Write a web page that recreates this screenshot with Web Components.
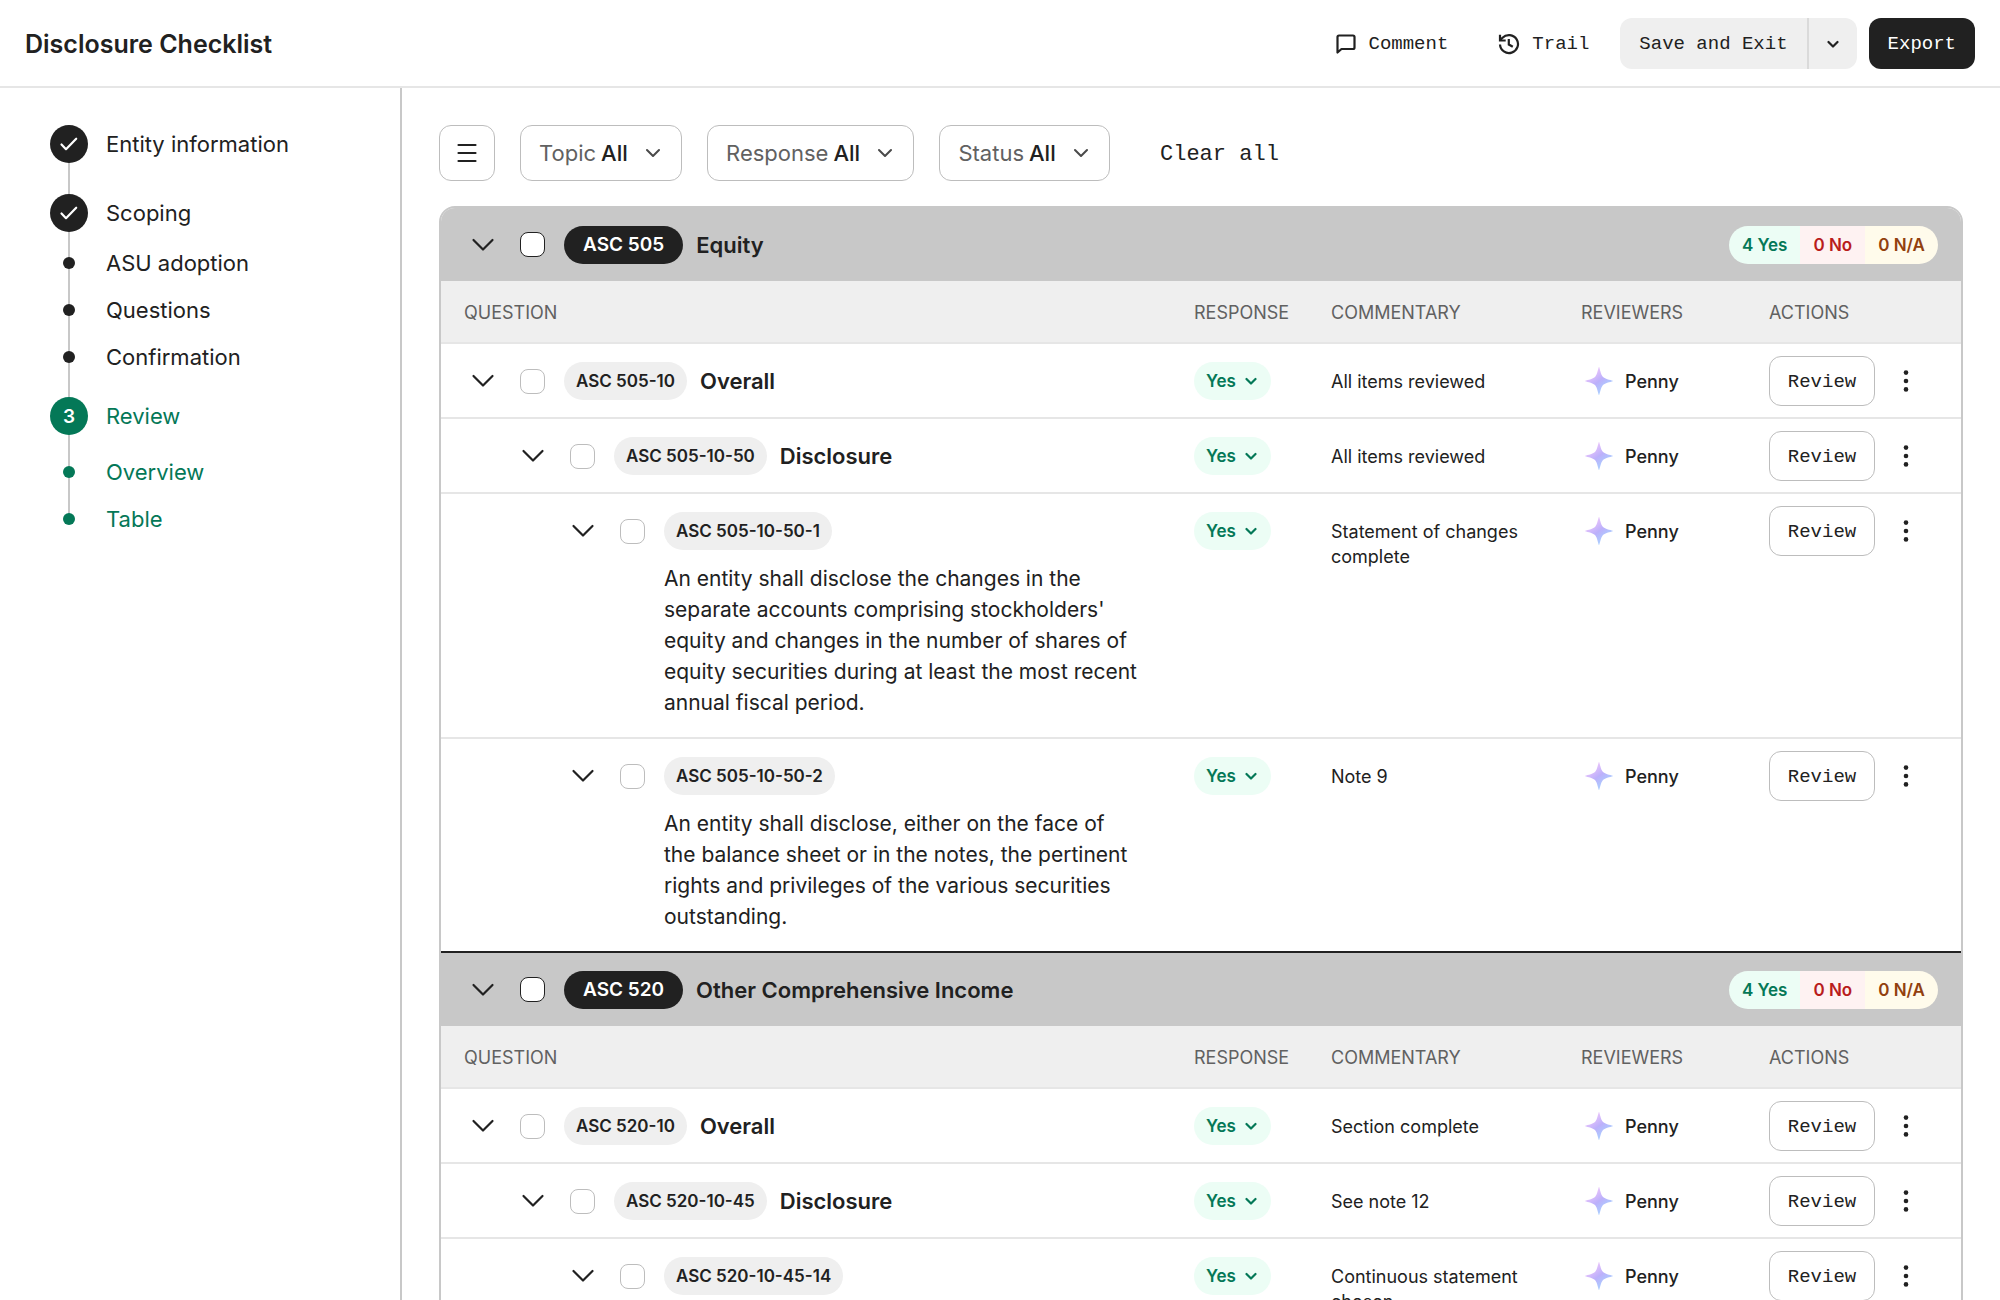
<!DOCTYPE html>
<html lang="en">
<head>
<meta charset="utf-8">
<title>Disclosure Checklist</title>
<style>
    body {
        margin: 0;
        font-family: Inter, "Liberation Sans", sans-serif;
        font-size: 22px;
        color: #212121;
        background: #fff;
        --mono: "Liberation Mono", monospace;
        --ink: #212121;
        --muted: #616161;
        --line: #e6e6e6;
        --edge: #c8c8c8;
        --soft: #efefef;
        --green: #047857;
    }
</style>
</head>
<body>

<checklist-app>
    <app-header slot="header">Disclosure Checklist</app-header>

    <step-list slot="steps">
        <step-item kind="done">Entity information</step-item>
        <step-item kind="done" class="spaced">Scoping</step-item>
        <step-item kind="sub" class="first-sub">ASU adoption</step-item>
        <step-item kind="sub">Questions</step-item>
        <step-item kind="sub">Confirmation</step-item>
        <step-item kind="current" number="3">Review</step-item>
        <step-item kind="sub" active>Overview</step-item>
        <step-item kind="sub" active>Table</step-item>
    </step-list>

    <filter-bar></filter-bar>
    <disclosure-table></disclosure-table>
</checklist-app>

<script>
const icons = {
    chevron: '<svg width="14" height="14" viewBox="0 0 14 14" fill="none" stroke="currentColor" stroke-width="2" stroke-linecap="round" stroke-linejoin="round"><path d="M1 4l6 6 6-6"/></svg>',
    chevronSmall: '<svg width="12" height="12" viewBox="0 0 12 12" fill="none" stroke="currentColor" stroke-width="2.2" stroke-linecap="round" stroke-linejoin="round"><path d="M1.5 4L6 8.5 10.5 4"/></svg>',
    expand: '<svg width="24" height="24" viewBox="0 0 24 24" fill="none" stroke="currentColor" stroke-width="2.2" stroke-linecap="round" stroke-linejoin="round"><path d="M2.5 7L12 16.5 21.5 7"/></svg>',
    check: '<svg width="20" height="20" viewBox="0 0 20 20" fill="none" stroke="currentColor" stroke-width="2.2" stroke-linecap="round" stroke-linejoin="round"><path d="M2.5 10.5L7 15.2 17.2 4.7"/></svg>',
    comment: '<svg width="22" height="22" viewBox="0 0 22 22" fill="none" stroke="currentColor" stroke-width="2.2" stroke-linejoin="round"><path d="M4 2.5h14a1.5 1.5 0 0 1 1.5 1.5v10.5a1.5 1.500 0 0 1-1.5 1.5H6.500L2.5 19.500V4A1.5 1.500 0 0 1 4 2.500z"/></svg>',
    trail: '<svg width="22" height="22" viewBox="0 0 22 22" fill="none" stroke="currentColor" stroke-width="2.2"><path d="M2 11.500a9 9 0 1 0 2.500-6.700L2 7.300"/><path d="M2 1.800v5.700h5.700"/><path d="M10.800 6v5.500l4 2.300"/></svg>',
    menu: '<svg width="20" height="20" viewBox="0 0 20 20" fill="none" stroke="currentColor" stroke-width="2.2" stroke-linecap="round"><path d="M1.500 2h17M1.500 10h17M1.500 18h17"/></svg>',
    dots: '<svg width="6" height="22" viewBox="0 0 6 22" fill="currentColor"><circle cx="3" cy="2.600" r="2.300"/><circle cx="3" cy="11" r="2.300"/><circle cx="3" cy="19.400" r="2.300"/></svg>',
    spark: `<svg width="28" height="28" viewBox="0 0 28 28">
        <defs><linearGradient id="g" x1="0.2" y1="0.1" x2="0.8" y2="0.9">
            <stop offset="0.15" stop-color="#e3c1fb"/><stop offset="0.5" stop-color="#bcb0fb"/><stop offset="0.9" stop-color="#a9d0ff"/>
        </linearGradient></defs>
        <path fill="url(#g)" d="M14 0C14.600 0 15.600 7.500 18 10C20.500 12.400 28 13.400 28 14C28 14.600 20.500 15.600 18 18C15.600 20.500 14.600 28 14 28C13.400 28 12.400 20.500 10 18C7.500 15.600 0 14.600 0 14C0 13.400 7.500 12.400 10 10C12.400 7.500 13.400 0 14 0Z"/></svg>`
};

const topics = [
    {
        code: 'ASC 505', title: 'Equity', counts: ['4 Yes', '0 No', '0 N/A'],
        rows: [
            { level: 0, code: 'ASC 505-10', title: 'Overall', note: 'All items reviewed' },
            { level: 1, code: 'ASC 505-10-50', title: 'Disclosure', note: 'All items reviewed' },
            { level: 2, code: 'ASC 505-10-50-1', note: 'Statement of changes complete',
              text: "An entity shall disclose the changes in the separate accounts comprising stockholders' equity and changes in the number of shares of equity securities during at least the most recent annual fiscal period." },
            { level: 2, code: 'ASC 505-10-50-2', note: 'Note 9',
              text: 'An entity shall disclose, either on the face of the balance sheet or in the notes, the pertinent rights and privileges of the various securities outstanding.' }
        ]
    },
    {
        code: 'ASC 520', title: 'Other Comprehensive Income', counts: ['4 Yes', '0 No', '0 N/A'],
        rows: [
            { level: 0, code: 'ASC 520-10', title: 'Overall', note: 'Section complete' },
            { level: 1, code: 'ASC 520-10-45', title: 'Disclosure', note: 'See note 12' },
            { level: 2, code: 'ASC 520-10-45-14', note: 'Continuous statement chosen' }
        ]
    }
];

class BaseElement extends HTMLElement {
    constructor() {
        super();
        this.attachShadow({ mode: 'open' });
    }

    connectedCallback() {
        const template = document.createElement('template');
        template.innerHTML = `
        <style>
            *{ box-sizing: border-box; }
            svg{ display: block; flex: none; }
            button, select{ margin: 0; font: inherit; color: inherit; background: none; border: 0; padding: 0; cursor: pointer; }
        </style>` + this.render();
        this.shadowRoot.replaceChildren(template.content.cloneNode(true));
    }
}

class ChecklistApp extends BaseElement {
    render() {
        return `
        <style>
            :host{
                display: flex;
                flex-direction: column;
                height: 100vh;
            }
            .body{
                flex: 1;
                min-height: 0;
                display: flex;
            }
            aside{
                flex: 0 0 20%;
                min-width: 320px;
                box-sizing: content-box;
                border-right: 2px solid var(--edge);
            }
            main{
                flex: 1;
                min-width: 0;
                padding: 37px 37px 0;
                overflow-y: auto;
                scrollbar-width: none;
            }
        </style>
        <slot name="header"></slot>
        <div class="body">
            <aside><slot name="steps"></slot></aside>
            <main><slot></slot></main>
        </div>`;
    }
}
customElements.define('checklist-app', ChecklistApp);

class AppHeader extends BaseElement {
    render() {
        return `
        <style>
            :host{ display: block; }
            header{
                display: flex;
                align-items: center;
                justify-content: space-between;
                padding: 18px 25px 17px;
                border-bottom: 2px solid var(--line);
            }
            h1{
                margin: 0;
                font-size: 25px;
                font-weight: 600;
            }
            .tools{
                display: flex;
                gap: 12px;
                font-family: var(--mono);
                font-size: 19px;
            }
            .tools button{
                display: flex;
                align-items: center;
                gap: 12px;
                height: 51px;
                padding: 0 19px;
            }
            .split{
                display: flex;
                background: var(--soft);
                border-radius: 12px;
            }
            .split button + button{ border-left: 2px solid #dadada; padding: 0 18px; }
            .tools .primary{
                background: var(--ink);
                color: #fff;
                border-radius: 12px;
            }
        </style>
        <header>
            <h1><slot></slot></h1>
            <div class="tools">
                <button>${icons.comment}Comment</button>
                <button>${icons.trail}Trail</button>
                <div class="split">
                    <button>Save and Exit</button>
                    <button aria-label="More">${icons.chevronSmall}</button>
                </div>
                <button class="primary">Export</button>
            </div>
        </header>`;
    }
}
customElements.define('app-header', AppHeader);

class StepList extends BaseElement {
    render() {
        return `
        <style>
            :host{ display: block; padding: 37px 25px 0 50px; }
            /* the rail runs from the first marker's middle to the last one's */
            nav{
                display: flex;
                flex-direction: column;
                background: linear-gradient(var(--edge), var(--edge)) 18px 19px / 2px calc(100% - 42px) no-repeat;
            }
        </style>
        <nav><slot></slot></nav>`;
    }
}
customElements.define('step-list', StepList);

class StepItem extends BaseElement {
    render() {
        const kind = this.getAttribute('kind');
        const inner = kind === 'done' ? icons.check : (this.getAttribute('number') || '');
        return `
        <style>
            :host{ display: block; }
            :host(.spaced){ margin-top: 31px; }
            :host(.first-sub){ margin-top: 7px; }
            :host([kind="current"]){ margin: 17px 0 13px; }
            :host([kind="current"]), :host([active]){ color: var(--green); }
            a{
                display: flex;
                align-items: center;
                gap: 18px;
                height: 38px;
                color: inherit;
                text-decoration: none;
            }
            :host([kind="sub"]) a{ height: 47px; }
            .slot{ width: 38px; display: flex; justify-content: center; }
            .marker{
                width: 38px;
                height: 38px;
                border-radius: 50%;
                display: flex;
                align-items: center;
                justify-content: center;
                background: var(--ink);
                color: #fff;
                font-size: 19px;
                font-weight: 600;
            }
            :host([kind="current"]) .marker, :host([active]) .marker{ background: var(--green); }
            :host([kind="sub"]) .marker{ width: 12px; height: 12px; }
        </style>
        <a href="#"><span class="slot"><span class="marker">${inner}</span></span><span><slot></slot></span></a>`;
    }
}
customElements.define('step-item', StepItem);

class FilterSelect extends BaseElement {
    render() {
        return `
        <style>
            :host{ display: block; }
            div{
                display: flex;
                align-items: center;
                height: 56px;
                padding: 0 18px;
                border: 1px solid #bdbdbd;
                border-radius: 12px;
            }
            label{ color: var(--muted); margin-right: 5px; }
            select{ appearance: none; font-weight: 500; padding-right: 32px; margin-right: -14px; }
            svg{ color: #4a4a4a; pointer-events: none; margin-right: 3px; }
        </style>
        <div>
            <label for="pick"><slot></slot></label>
            <select id="pick"><option>All</option></select>
            ${icons.chevron}
        </div>`;
    }
}
customElements.define('filter-select', FilterSelect);

class FilterBar extends BaseElement {
    render() {
        return `
        <style>
            :host{ display: block; margin-bottom: 25px; }
            div{ display: flex; align-items: center; gap: 25px; }
            .menu{
                width: 56px;
                height: 56px;
                display: flex;
                align-items: center;
                justify-content: center;
                border: 1px solid #bdbdbd;
                border-radius: 12px;
            }
            .clear{ font-family: var(--mono); padding: 2px 25px 0; }
        </style>
        <div>
            <button class="menu" aria-label="Menu">${icons.menu}</button>
            <filter-select>Topic</filter-select>
            <filter-select>Response</filter-select>
            <filter-select>Status</filter-select>
            <button class="clear">Clear all</button>
        </div>`;
    }
}
customElements.define('filter-bar', FilterBar);

class ResponseSelect extends BaseElement {
    render() {
        return `
        <style>
            :host{ display: block; }
            div{
                display: inline-flex;
                align-items: center;
                height: 38px;
                padding: 0 14px 0 12px;
                border-radius: 19px;
                background: #ecfdf5;
                color: var(--green);
                font-size: 17px;
                font-weight: 600;
            }
            select{ appearance: none; padding-right: 22px; margin-right: -13px; }
            svg{ pointer-events: none; }
        </style>
        <div>
            <select aria-label="Response"><option>Yes</option></select>
            ${icons.chevronSmall}
        </div>`;
    }
}
customElements.define('response-select', ResponseSelect);

class ReviewerTag extends BaseElement {
    render() {
        return `
        <style>
            :host{ display: flex; align-items: center; gap: 12px; height: 38px; padding-left: 4px; font-weight: 500; }
        </style>
        ${icons.spark}<span><slot></slot></span>`;
    }
}
customElements.define('reviewer-tag', ReviewerTag);

class CountBadge extends BaseElement {
    render() {
        return `
        <style>
            :host{
                display: flex;
                border-radius: 19px;
                overflow: hidden;
                font-size: 17px;
                font-weight: 600;
                line-height: 38px;
            }
            ::slotted(span){ padding: 0 13px; }
            ::slotted(.yes){ background: #ecfdf5; color: #047857; }
            ::slotted(.no){ background: #fef2f2; color: #b91c1c; }
            ::slotted(.na){ background: #fffbeb; color: #92400e; }
        </style>
        <slot></slot>`;
    }
}
customElements.define('count-badge', CountBadge);

class DisclosureTable extends BaseElement {
    row(item, id) {
        return `
        <tr>
            <td class="question level-${item.level}">
                <div class="line">
                    <button class="expand" aria-label="Collapse">${icons.expand}</button>
                    <input type="checkbox" aria-labelledby="${id}">
                    <span class="code" id="${id}">${item.code}</span>
                    ${item.title ? `<strong>${item.title}</strong>` : ''}
                </div>
                ${item.text ? `<p>${item.text}</p>` : ''}
            </td>
            <td><response-select></response-select></td>
            <td class="note">${item.note}</td>
            <td><reviewer-tag>Penny</reviewer-tag></td>
            <td class="actions">
                <div><button class="review">Review</button><button class="more" aria-label="More actions">${icons.dots}</button></div>
            </td>
        </tr>`;
    }

    topic(topic, n) {
        const [yes, no, na] = topic.counts;
        return `
        <section>
            <div class="topic">
                <div class="line">
                    <button class="expand" aria-label="Collapse">${icons.expand}</button>
                    <input type="checkbox" aria-labelledby="topic-${n}">
                    <span class="code" id="topic-${n}">${topic.code}</span>
                    <h2>${topic.title}</h2>
                </div>
                <count-badge><span class="yes">${yes}</span><span class="no">${no}</span><span class="na">${na}</span></count-badge>
            </div>
            <table>
                <colgroup><col><col class="c-response"><col class="c-note"><col class="c-reviewer"><col class="c-actions"></colgroup>
                <thead>
                    <tr><th>QUESTION</th><th>RESPONSE</th><th>COMMENTARY</th><th>REVIEWERS</th><th>ACTIONS</th></tr>
                </thead>
                <tbody>${topic.rows.map((item, i) => this.row(item, `row-${n}-${i}`)).join('')}</tbody>
            </table>
        </section>`;
    }

    render() {
        return `
        <style>
            :host{
                display: block;
                border: 2px solid var(--edge);
                border-radius: 16px 16px 0 0;
                overflow: hidden;
                font-size: 18px;
            }
            .topic{
                display: flex;
                align-items: center;
                justify-content: space-between;
                height: 73px;
                padding: 0 23px;
                background: var(--edge);
            }
            section + section .topic{
                height: 75px;
                border-top: 2px solid var(--ink);
            }
            .line{ display: flex; align-items: center; height: 38px; }
            .expand{ width: 37px; height: 37px; display: flex; align-items: center; justify-content: center; }
            input{
                appearance: none;
                width: 25px;
                height: 25px;
                margin: 0 19px;
                border: 1px solid #bdbdbd;
                border-radius: 8px;
                background: #fff;
            }
            .topic input{ border-color: var(--ink); }
            .code{
                height: 38px;
                line-height: 38px;
                padding: 0 12px;
                margin-right: 13px;
                border-radius: 19px;
                background: var(--soft);
                font-size: 17px;
                font-weight: 600;
                white-space: nowrap;
            }
            .topic .code{ padding: 0 19px; background: var(--ink); color: #fff; font-size: 19px; }
            h2, strong{ margin: 0; font-size: 22px; font-weight: 600; }

            table{ width: 100%; table-layout: fixed; border-collapse: separate; border-spacing: 0; }
            .c-response{ width: 137px; }
            .c-note{ width: 250px; }
            .c-reviewer{ width: 188px; }
            .c-actions{ width: 192px; }
            th{
                height: 63px;
                padding: 2px 0 0;
                text-align: left;
                font-weight: 400;
                color: var(--muted);
                background: var(--soft);
                border-bottom: 2px solid var(--line);
            }
            th:first-child{ padding-left: 23px; }
            td{
                padding: 18px 0 17px;
                vertical-align: top;
                border-bottom: 2px solid var(--line);
            }
            tbody tr:last-child td{ border-bottom: 0; }
            .question{ padding-left: 23px; padding-right: 54px; }
            .level-1{ padding-left: 73px; }
            .level-2{ padding-left: 123px; }
            p{ margin: 13px 0 2px 100px; font-size: 21px; line-height: 31px; }
            .note{ padding: 25px 25px 0 0; line-height: 25px; }
            .actions{ padding: 12px 0 0; }
            .actions div{ display: flex; align-items: center; gap: 12px; }
            .review{
                width: 106px;
                height: 50px;
                padding-top: 2px;
                font-family: var(--mono);
                font-size: 19px;
                border: 1px solid #bdbdbd;
                border-radius: 12px;
            }
            .more{ width: 38px; height: 38px; display: flex; align-items: center; justify-content: center; }
        </style>
        ${topics.map((t, n) => this.topic(t, n)).join('')}`;
    }
}
customElements.define('disclosure-table', DisclosureTable);
</script>
</body>
</html>
